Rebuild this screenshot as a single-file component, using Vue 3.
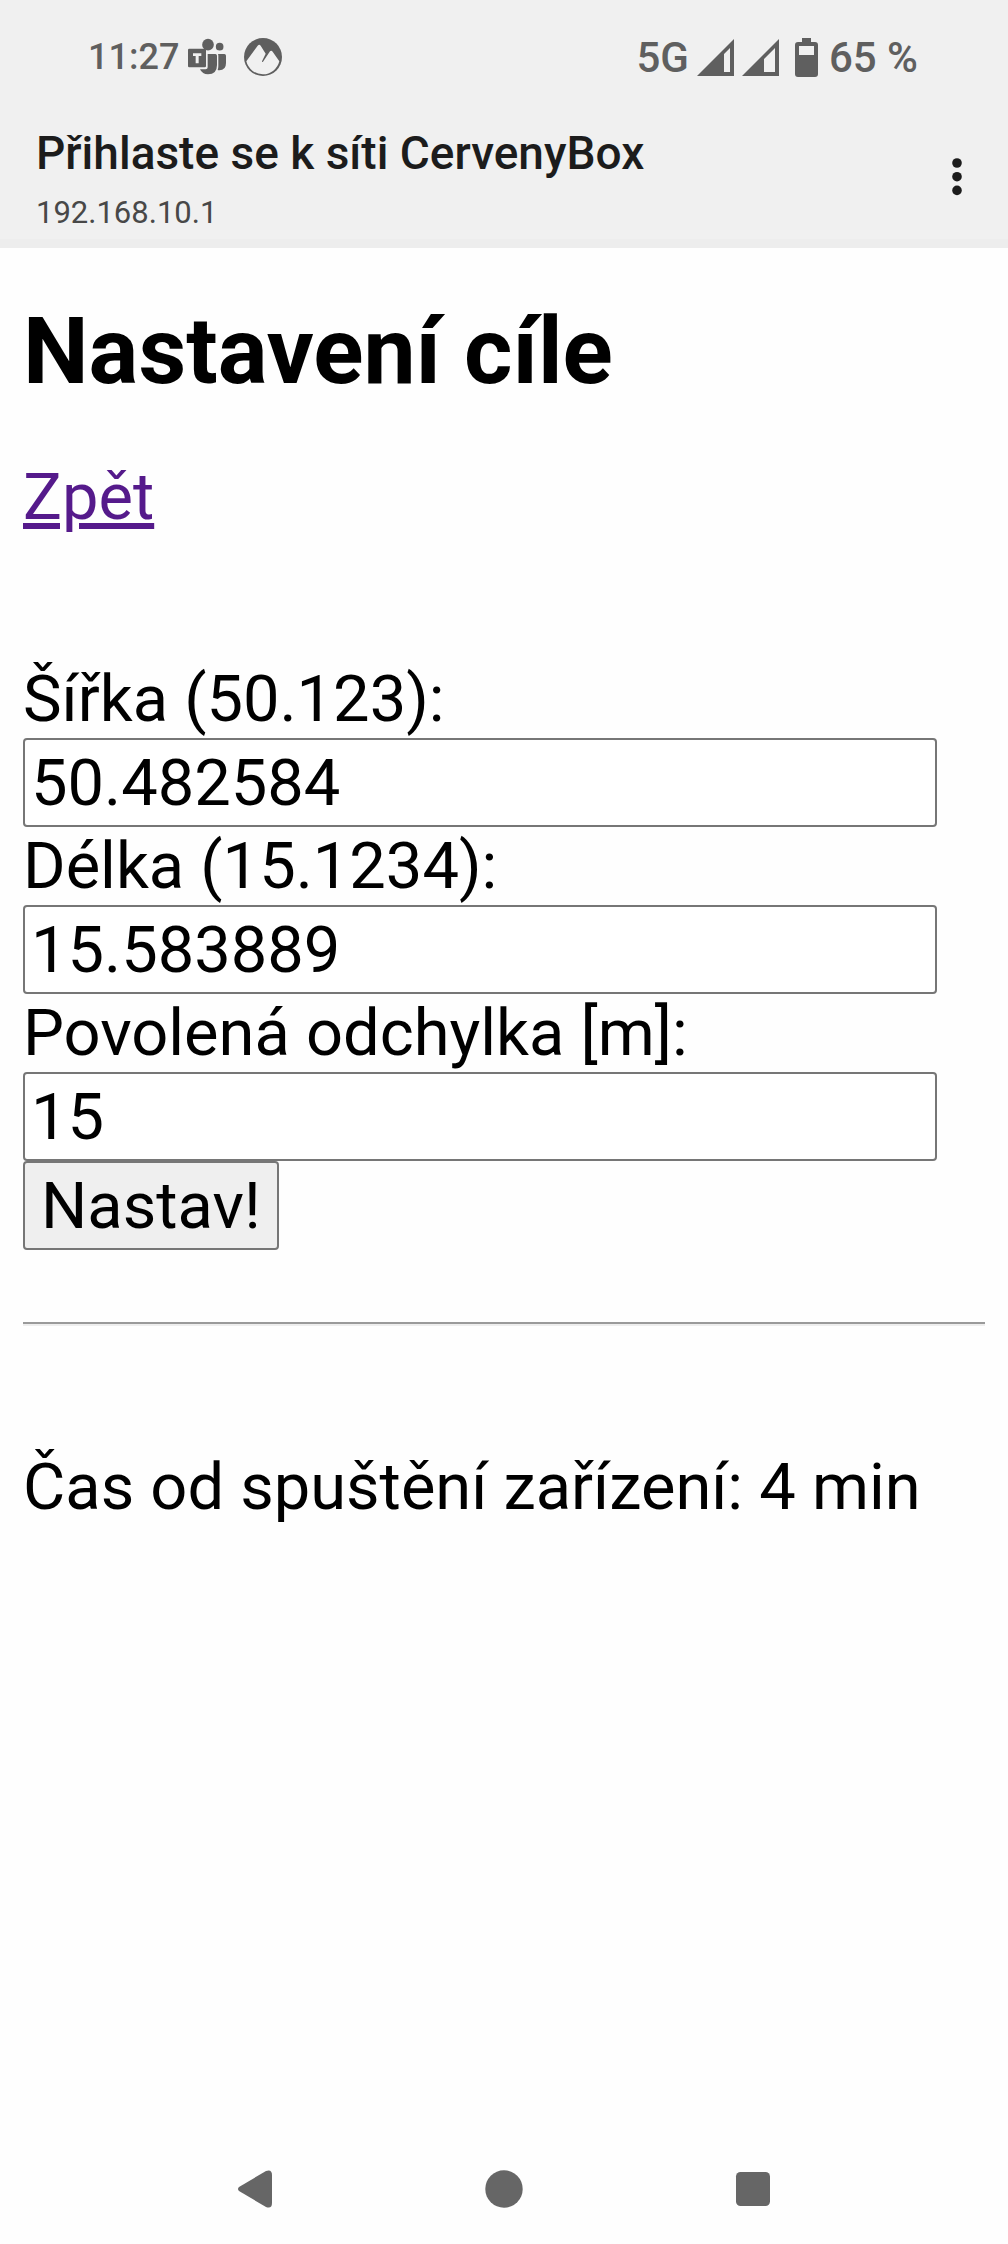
<script setup>
import { ref } from 'vue'

const fields = ref([
  { id: 'lat', label: 'Šířka (50.123):', value: '50.482584' },
  { id: 'lon', label: 'Délka (15.1234):', value: '15.583889' },
  { id: 'tolerance', label: 'Povolená odchylka [m]:', value: '15' },
])
</script>

<template>
  <div class="screen">
    <header class="top">
      <div class="status">
        <div class="status-left">
          <span class="clock">11:27</span>
          <svg class="teams" width="38" height="38" viewBox="384 56 114 114" aria-hidden="true">
            <g fill="#5f5f5f">
              <circle cx="444" cy="76" r="17.5" />
              <circle cx="479" cy="82" r="11.5" />
              <path d="M474 104h19q5 0 5 5v22q0 22-20 22-3 0-5-1 2-5 2-12v-30q0-4-1-6z" />
              <path d="M443 104h23q5 0 5 5v28q0 28-27 28-17 0-24-15h17q6 0 6-6z" />
              <rect x="384" y="88" width="54" height="56" rx="4" />
            </g>
            <path d="M399 102h25v8h-8v22h-9v-22h-8z" fill="#f0f0f0" />
          </svg>
          <svg width="38" height="38" viewBox="552 57 114 114" aria-hidden="true">
            <circle cx="609" cy="114" r="57" fill="#5f5f5f" />
            <path d="M559 127L593 80q5-6 9 0L617 104 606 127q0 3 3 1L630 97q4-4 8 1L658 127A51 51 0 0 1 559 127z" fill="#f0f0f0" />
          </svg>
        </div>
        <div class="status-right">
          <span class="network">5G</span>
          <svg width="37" height="37" viewBox="0 0 37 37" aria-hidden="true">
            <path d="M37 0V37H0zM33 9L27 15V33H33z" fill="#5f5f5f" fill-rule="evenodd" />
          </svg>
          <svg width="37" height="37" viewBox="0 0 37 37" aria-hidden="true">
            <path d="M37 0V37H0zM33 9L22 20V33H33z" fill="#5f5f5f" fill-rule="evenodd" />
          </svg>
          <svg class="battery" width="23" height="39" viewBox="0 0 23 39" aria-hidden="true">
            <path d="M7 0h9v4h4q3 0 3 3v29q0 3-3 3H3q-3 0-3-3V7q0-3 3-3h4zM4 8v9h15V8z" fill="#5f5f5f" fill-rule="evenodd" />
          </svg>
          <span class="percent">65 %</span>
        </div>
      </div>
      <div class="bar">
        <div class="site">
          <div class="title">Přihlaste se k síti CervenyBox</div>
          <div class="host">192.168.10.1</div>
        </div>
        <button class="menu" type="button" aria-label="Menu">
          <svg width="10" height="38" viewBox="0 0 10 38" aria-hidden="true">
            <g fill="#1c1c1c">
              <circle cx="5" cy="5" r="4.8" />
              <circle cx="5" cy="18.7" r="4.8" />
              <circle cx="5" cy="32.4" r="4.8" />
            </g>
          </svg>
        </button>
      </div>
      <div class="progress"></div>
    </header>

    <main class="page">
      <h1>Nastavení cíle</h1>
      <a class="back" href="#">Zpět</a>
      <form class="form" @submit.prevent>
        <template v-for="f in fields" :key="f.id">
          <label :for="f.id">{{ f.label }}</label>
          <input :id="f.id" v-model="f.value" type="text" />
        </template>
        <button class="submit" type="submit">Nastav!</button>
      </form>
      <hr />
      <p class="uptime">Čas od spuštění zařízení: 4 min</p>
    </main>

    <nav class="nav">
      <button type="button" aria-label="Back">
        <svg width="38" height="38" viewBox="0 0 38 38" aria-hidden="true">
          <path d="M3 17L30 1q6-2 6 4V33q0 6-6 4L3 21q-2-2 0-4z" fill="#666" />
        </svg>
      </button>
      <button type="button" aria-label="Home">
        <svg width="38" height="38" viewBox="0 0 38 38" aria-hidden="true">
          <circle cx="19" cy="19" r="18.7" fill="#666" />
        </svg>
      </button>
      <button type="button" aria-label="Recents">
        <svg width="38" height="38" viewBox="0 0 38 38" aria-hidden="true">
          <rect x="2" y="2" width="34" height="34" rx="4.5" fill="#666" />
        </svg>
      </button>
    </nav>
  </div>
</template>

<style>
body {
  margin: 0;
  background: #fefefe;
}
</style>

<style scoped>
.screen {
  display: flex;
  flex-direction: column;
  min-height: 100vh;
  font-family: Roboto, "Noto Sans", sans-serif;
  color: #000;
}

svg {
  display: block;
  flex: none;
}

.top {
  background: #f0f0f0;
}

.status {
  display: flex;
  justify-content: space-between;
  align-items: center;
  height: 114px;
  padding: 0 90px 0 88px;
  color: #5f5f5f;
  font-size: 42px;
  font-weight: 500;
}

.status-left,
.status-right {
  display: flex;
  align-items: center;
}

.status-left {
  gap: 18px;
}

.clock {
  width: 82px;
  white-space: nowrap;
  font-size: 36px;
}

.status-right {
  gap: 8px;
}

.battery {
  margin: 0 3px 0 8px;
}

.bar {
  display: flex;
  justify-content: space-between;
  align-items: center;
  height: 125px;
  padding: 0 25px 0 36px;
}

.site {
  padding-top: 8px;
}

.title {
  color: #1c1c1c;
  font-size: 46px;
  line-height: 64px;
  font-weight: 500;
}

.host {
  color: #484848;
  font-size: 31px;
  line-height: 56px;
}

.menu {
  display: flex;
  justify-content: center;
  align-items: center;
  width: 52px;
  height: 96px;
  padding: 0;
  border: 0;
  background: none;
}

.progress {
  height: 9px;
  background: #ededed;
}

.page {
  flex: 1;
  padding: 50px 23px 0;
  font-size: 65px;
  line-height: 78px;
}

h1 {
  margin: 0 0 52px;
  font-size: 93px;
  line-height: 108px;
  font-weight: 700;
}

.back {
  display: block;
  width: fit-content;
  color: #551a8b;
}

.form {
  display: flex;
  flex-direction: column;
  align-items: flex-start;
  margin-top: 124px;
}

input,
.submit {
  box-sizing: border-box;
  height: 89px;
  margin: 0;
  border: 2px solid #767676;
  border-radius: 4px;
  font: inherit;
  color: #000;
}

input {
  width: 95%;
  padding: 0 6px;
  background: #fff;
}

.submit {
  padding: 0 16px;
  background: #efefef;
}

hr {
  margin: 72px 0 122px;
  border: 0;
  border-top: 2px solid #9a9a9a;
  border-bottom: 2px solid #eee;
}

.uptime {
  margin: 0;
}

.nav {
  display: flex;
  justify-content: center;
  height: 110px;
}

.nav button {
  display: flex;
  justify-content: center;
  align-items: center;
  width: 249px;
  padding: 0;
  border: 0;
  background: none;
}
</style>
